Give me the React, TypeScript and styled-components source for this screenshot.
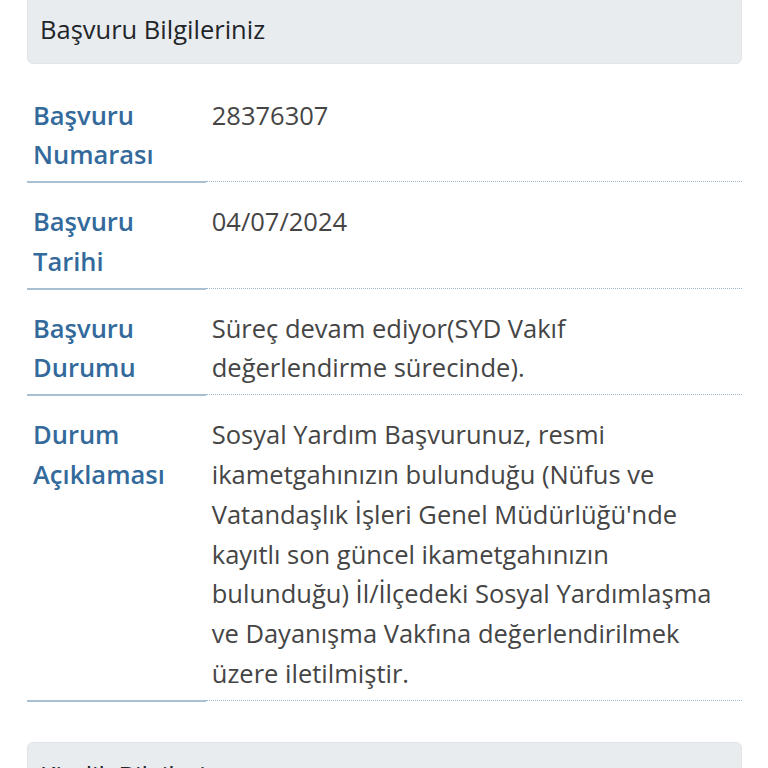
import React from "react";
import styled, { createGlobalStyle } from "styled-components";

const Global = createGlobalStyle`
  html, body { margin: 0; padding: 0; background: #ffffff; }
  body { font-family: "Open Sans", "Noto Sans", sans-serif; overflow: hidden; }
`;

const Page = styled.div`
  padding: 0 26px 0 27px;
  margin-top: -4px;
`;

const CardHeader = styled.div<{ $gap?: number }>`
  background: #e9ecef;
  border: 1px solid #e1e5e9;
  border-radius: 6px;
  padding: 13px 12px 13px 12px;
  font-size: 25.5px;
  line-height: 39.5px;
  color: #222529;
  margin-top: ${(p) => p.$gap ?? 0}px;
`;

const Table = styled.div`
  margin-top: 13px;
  display: flex;
  flex-direction: column;
`;

const Row = styled.div`
  display: grid;
  grid-template-columns: 25% 75%;
`;

const Label = styled.div`
  padding: 19px 7px 6px 6px;
  font-size: 25.5px;
  line-height: 39.8px;
  font-weight: 600;
  color: #336a9b;
  border-bottom: 2px solid #a8c0d2;
`;

const Value = styled.div`
  padding: 19px 12px 6px 6px;
  font-size: 25.5px;
  line-height: 39.8px;
  color: #454545;
  border-bottom: 1px dotted #9fb9cc;
  margin-bottom: 1px;
`;

const rows: [string, string][] = [
  ["Başvuru Numarası", "28376307"],
  ["Başvuru Tarihi", "04/07/2024"],
  ["Başvuru Durumu", "Süreç devam ediyor(SYD Vakıf değerlendirme sürecinde)."],
  [
    "Durum Açıklaması",
    "Sosyal Yardım Başvurunuz, resmi ikametgahınızın bulunduğu (Nüfus ve Vatandaşlık İşleri Genel Müdürlüğü'nde kayıtlı son güncel ikametgahınızın bulunduğu) İl/İlçedeki Sosyal Yardımlaşma ve Dayanışma Vakfına değerlendirilmek üzere iletilmiştir.",
  ],
];

export default function App() {
  return (
    <>
      <Global />
      <Page>
        <CardHeader>Başvuru Bilgileriniz</CardHeader>
        <Table>
          {rows.map(([l, v]) => (
            <Row key={l}>
              <Label>{l}</Label>
              <Value>{v}</Value>
            </Row>
          ))}
        </Table>
        <CardHeader $gap={40}>Kimlik Bilgileri</CardHeader>
      </Page>
    </>
  );
}
